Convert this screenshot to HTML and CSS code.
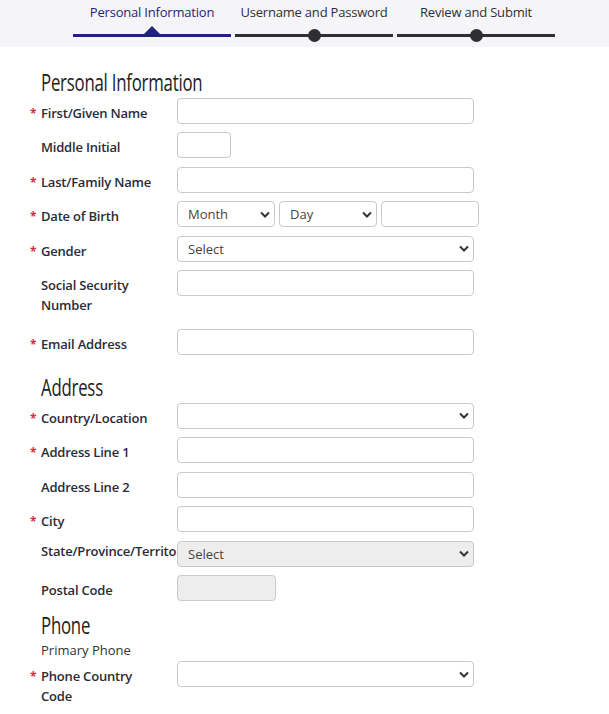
FILE: index.html
```html
<!DOCTYPE html>
<html lang="en">
<head>
<meta charset="utf-8">
<title>Personal Information</title>
<link rel="stylesheet" href="styles.css">
</head>
<body>
<nav class="stepper">
  <div class="step active"><span class="step-label">Personal Information</span><span class="step-bar"><span class="marker tri"></span></span></div>
  <div class="step"><span class="step-label">Username and Password</span><span class="step-bar"><span class="marker dot"></span></span></div>
  <div class="step"><span class="step-label">Review and Submit</span><span class="step-bar"><span class="marker dot"></span></span></div>
</nav>
<main class="form">
  <h2 class="section-title first">Personal Information</h2>
  <div class="row"><label class="lbl req">First/Given Name</label><input class="ctl wide" type="text"></div>
  <div class="row"><label class="lbl">Middle Initial</label><input class="ctl tiny" type="text"></div>
  <div class="row"><label class="lbl req">Last/Family Name</label><input class="ctl wide" type="text"></div>
  <div class="row"><label class="lbl req">Date of Birth</label>
    <div class="dob">
      <select class="ctl third"><option>Month</option></select>
      <select class="ctl third"><option>Day</option></select>
      <input class="ctl third" type="text">
    </div>
  </div>
  <div class="row"><label class="lbl req">Gender</label><select class="ctl wide"><option>Select</option></select></div>
  <div class="row tall"><label class="lbl">Social Security<br>Number</label><input class="ctl wide" type="text"></div>
  <div class="row"><label class="lbl req">Email Address</label><input class="ctl wide" type="text"></div>

  <h2 class="section-title">Address</h2>
  <div class="row"><label class="lbl req">Country/Location</label><select class="ctl wide"><option></option></select></div>
  <div class="row"><label class="lbl req">Address Line 1</label><input class="ctl wide" type="text"></div>
  <div class="row"><label class="lbl">Address Line 2</label><input class="ctl wide" type="text"></div>
  <div class="row"><label class="lbl req">City</label><input class="ctl wide" type="text"></div>
  <div class="row"><label class="lbl over">State/Province/Territory</label><select class="ctl wide off" disabled><option>Select</option></select></div>
  <div class="row"><label class="lbl">Postal Code</label><input class="ctl small off" type="text" disabled></div>

  <h2 class="section-title phone">Phone</h2>
  <p class="sub">Primary Phone</p>
  <div class="row"><label class="lbl req">Phone Country<br>Code</label><select class="ctl wide"><option></option></select></div>
</main>
</body>
</html>
```
FILE: styles.css
```css
* { box-sizing: border-box; }
html, body { margin: 0; padding: 0; background: #fff; }
body { font-family: "Open Sans", "Noto Sans", sans-serif; color: #2b2b38; width: 609px; overflow: hidden; }

.stepper {
  background: #f5f5f7;
  height: 47px;
  display: flex;
  gap: 4px;
  padding-left: 73px;
}
.step { width: 158px; display: flex; flex-direction: column; align-items: center; }
.step-label { font-size: 13px; line-height: 16px; margin-top: 4px; color: #2f2f36; letter-spacing: -0.2px; }
.step.active .step-label { color: #25257a; }
.step-bar { position: relative; width: 100%; height: 3px; background: #2f2f33; margin-top: 14px; }
.step.active .step-bar { background: #22227e; }
.marker { position: absolute; left: 50%; }
.dot { width: 13px; height: 13px; border-radius: 50%; background: #2f2f33; top: -5px; margin-left: -6px; }
.tri { width: 0; height: 0; border-left: 8px solid transparent; border-right: 8px solid transparent; border-bottom: 8px solid #22227e; top: -8px; margin-left: -8px; }

.form { padding-left: 41px; }
.section-title {
  font-family: "Open Sans", "Noto Sans", sans-serif;
  font-weight: normal;
  font-size: 23px;
  line-height: 28px;
  margin: 18px 0 2px 0;
  color: #222;
  transform: scaleX(0.73);
  transform-origin: left center;
  letter-spacing: -0.3px;
}
.section-title.first { margin-top: 21px; margin-bottom: 2px; }
.section-title.phone { margin-top: 10.5px; margin-bottom: 0; }

.row { display: flex; align-items: flex-start; margin-bottom: 8.4px; }
.row.tall { margin-bottom: 14px; }
.lbl {
  width: 136px;
  flex: none;
  font-size: 13px;
  font-weight: 600;
  line-height: 20px;
  padding-top: 5px;
  color: #2b2b38;
  letter-spacing: -0.2px;
}
.lbl.over { white-space: nowrap; padding-top: 0; }
.req::before {
  content: "*";
  float: left;
  width: 11px;
  margin-left: -11px;
  margin-top: 1px;
  color: #c9343c;
  font-size: 12px;
  line-height: 20px;
  font-weight: 700;
}
.ctl {
  height: 26px;
  border: 1px solid #c9c9c9;
  border-radius: 4px;
  background-color: #fff;
  font-family: "Open Sans", "Noto Sans", sans-serif;
  font-size: 13px;
  color: #444;
  padding: 0 10px;
  margin: 0;
  flex: none;
}
select.ctl {
  appearance: none;
  -webkit-appearance: none;
  background-image: url("data:image/svg+xml,%3Csvg xmlns='http://www.w3.org/2000/svg' width='10' height='7' viewBox='0 0 10 7'%3E%3Cpath d='M1 1.5l4 4 4-4' fill='none' stroke='%23333' stroke-width='2'/%3E%3C/svg%3E");
  background-repeat: no-repeat;
  background-position: right 4px center;
}
.wide { width: 297px; }
.tiny { width: 54px; }
.small { width: 99px; }
.third { width: 98px; }
.dob { display: flex; gap: 4px; }
.off, .off:disabled { background-color: #ededed; color: #444; opacity: 1; }
.sub { margin: 1px 0 1px 0; font-size: 13px; line-height: 20px; color: #333; }
```
